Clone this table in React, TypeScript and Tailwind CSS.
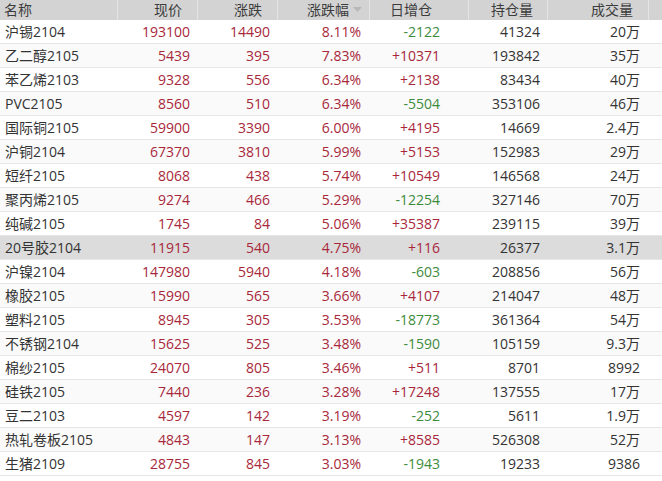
import React from "react";

const rows: [string, string, string, string, string, string, string][] = [
  ["沪锡2104", "193100", "14490", "8.11%", "-2122", "41324", "20万"],
  ["乙二醇2105", "5439", "395", "7.83%", "+10371", "193842", "35万"],
  ["苯乙烯2103", "9328", "556", "6.34%", "+2138", "83434", "40万"],
  ["PVC2105", "8560", "510", "6.34%", "-5504", "353106", "46万"],
  ["国际铜2105", "59900", "3390", "6.00%", "+4195", "14669", "2.4万"],
  ["沪铜2104", "67370", "3810", "5.99%", "+5153", "152983", "29万"],
  ["短纤2105", "8068", "438", "5.74%", "+10549", "146568", "24万"],
  ["聚丙烯2105", "9274", "466", "5.29%", "-12254", "327146", "70万"],
  ["纯碱2105", "1745", "84", "5.06%", "+35387", "239115", "39万"],
  ["20号胶2104", "11915", "540", "4.75%", "+116", "26377", "3.1万"],
  ["沪镍2104", "147980", "5940", "4.18%", "-603", "208856", "56万"],
  ["橡胶2105", "15990", "565", "3.66%", "+4107", "214047", "48万"],
  ["塑料2105", "8945", "305", "3.53%", "-18773", "361364", "54万"],
  ["不锈钢2104", "15625", "525", "3.48%", "-1590", "105159", "9.3万"],
  ["棉纱2105", "24070", "805", "3.46%", "+511", "8701", "8992"],
  ["硅铁2105", "7440", "236", "3.28%", "+17248", "137555", "17万"],
  ["豆二2103", "4597", "142", "3.19%", "-252", "5611", "1.9万"],
  ["热轧卷板2105", "4843", "147", "3.13%", "+8585", "526308", "52万"],
  ["生猪2109", "28755", "845", "3.03%", "-1943", "19233", "9386"],
];

const font = { fontFamily: '"Open Sans","Noto Sans CJK SC",sans-serif' };

export default function App() {
  return (
    <div className="w-[662px] h-[481px] bg-white overflow-hidden text-[14px] leading-none" style={font}>
      <div className="flex h-[20px] bg-[#d3d3d3] text-[#3c3c3c]">
        <div className="w-[118px] pl-[4px] flex items-center border-r border-[#e4e4e4]">名称</div>
        <div className="w-[80px] pr-[15px] flex items-center justify-end border-r border-[#e4e4e4]">现价</div>
        <div className="w-[80px] pr-[15px] flex items-center justify-end border-r border-[#e4e4e4]">涨跌</div>
        <div className="w-[92px] pr-[7px] flex items-center justify-end border-r border-[#e4e4e4]">
          <span>涨跌幅</span>
          <svg width="9" height="6" viewBox="0 0 9 6" className="ml-[4px]">
            <path d="M0 0 L9 0 L4.5 5 Z" fill="#b8b8b8" />
          </svg>
        </div>
        <div className="w-[99px] pr-[36px] flex items-center justify-end border-r border-[#e4e4e4]">日增仓</div>
        <div className="w-[79px] pr-[14px] flex items-center justify-end border-r border-[#e4e4e4]">持仓量</div>
        <div className="w-[101px] pr-[15px] flex items-center justify-end border-r border-[#e4e4e4]">成交量</div>
        <div className="flex-1"></div>
      </div>
      {rows.map((r, i) => {
        const hl = i === 9;
        const pos = r[4].startsWith("+");
        return (
          <div
            key={i}
            className={`flex h-[24px] items-center border-b border-[#e6e6e6] ${hl ? "bg-[#dcdcdc]" : i % 2 === 1 ? "bg-[#fafafa]" : "bg-white"}`}
          >
            <div className="w-[118px] pl-[5px] text-[#333333]">{r[0]}</div>
            <div className="w-[80px] pr-[8px] text-right text-[#a8283a]">{r[1]}</div>
            <div className="w-[80px] pr-[8px] text-right text-[#a8283a]">{r[2]}</div>
            <div className="w-[92px] pr-[9px] text-right text-[#a8283a]">{r[3]}</div>
            <div className={`w-[99px] pr-[29px] text-right ${pos ? "text-[#a8283a]" : "text-[#3d8b3d]"}`}>{r[4]}</div>
            <div className="w-[79px] pr-[8px] text-right text-[#333333]">{r[5]}</div>
            <div className="w-[101px] pr-[9px] text-right text-[#333333]">{r[6]}</div>
            <div className="flex-1"></div>
          </div>
        );
      })}
    </div>
  );
}
